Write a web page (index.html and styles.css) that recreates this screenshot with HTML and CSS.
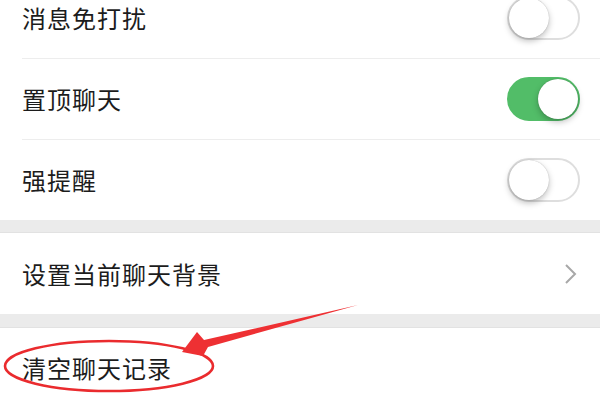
FILE: index.html
```html
<!DOCTYPE html>
<html lang="zh-CN">
<head>
<meta charset="utf-8">
<link rel="stylesheet" href="styles.css">
</head>
<body>
<div class="page">
  <section class="group group-first">
    <div class="row">
      <span class="label">消息免打扰</span>
      <span class="switch"><span class="knob"></span></span>
    </div>
    <div class="row row-line">
      <span class="label">置顶聊天</span>
      <span class="switch on"><span class="knob"></span></span>
    </div>
    <div class="row row-line">
      <span class="label">强提醒</span>
      <span class="switch"><span class="knob"></span></span>
    </div>
  </section>
  <div class="gap"></div>
  <section class="group">
    <div class="row row-bg">
      <span class="label">设置当前聊天背景</span>
      <svg class="chevron" width="14" height="22" viewBox="0 0 14 22"><path d="M2 2 L11 11 L2 20" fill="none" stroke="#a8a8a8" stroke-width="2"/></svg>
    </div>
  </section>
  <div class="gap gap2"></div>
  <section class="group">
    <div class="row row-last">
      <span class="label">清空聊天记录</span>
    </div>
  </section>
  <svg class="annot" width="600" height="400" viewBox="0 0 600 400">
    <ellipse cx="109" cy="366" rx="104" ry="25" fill="none" stroke="#ea2b2e" stroke-width="2.6"/>
    <polygon points="182,352 197,332 204,340 358,305 208,347 203,356" fill="#ee3033"/>
  </svg>
</div>
</body>
</html>
```
FILE: styles.css
```css
html, body {
  margin: 0;
  padding: 0;
  background: #ffffff;
}
.page {
  position: relative;
  width: 600px;
  height: 400px;
  overflow: hidden;
  font-family: "Noto Sans CJK SC", "Noto Sans", sans-serif;
  color: #1c1c1c;
}
.group {
  background: #ffffff;
}
.group-first {
  margin-top: -22px;
}
.row {
  height: 80px;
  display: flex;
  align-items: center;
  justify-content: space-between;
  padding: 0 20px 0 22px;
  position: relative;
}
.row-line {
  border-top: 1px solid #ededed;
  margin-left: 22px;
  padding-left: 0;
}
.row-bg {
  height: 81px;
  padding-right: 22px;
}
.row-last {
  height: 80px;
}
.label {
  font-size: 24px;
  letter-spacing: 1px;
  line-height: 1;
}
.gap {
  height: 13px;
  background: #ebebeb;
  border-bottom: 1px solid #e2e2e2;
  box-sizing: border-box;
}
.gap2 {
  height: 14px;
}
.switch {
  width: 73px;
  height: 44px;
  box-sizing: border-box;
  border-radius: 22px;
  border: 2px solid #dedede;
  background: #ffffff;
  display: flex;
  align-items: center;
  position: relative;
}
.knob {
  width: 40px;
  height: 40px;
  border-radius: 50%;
  background: #ffffff;
  box-shadow: 0 3px 6px rgba(0,0,0,0.25), 0 0 1px rgba(0,0,0,0.3);
}
.switch.on {
  background: #52bd68;
  border-color: #52bd68;
  justify-content: flex-end;
}
.chevron {
  display: block;
}
.annot {
  position: absolute;
  left: 0;
  top: 0;
}
```
